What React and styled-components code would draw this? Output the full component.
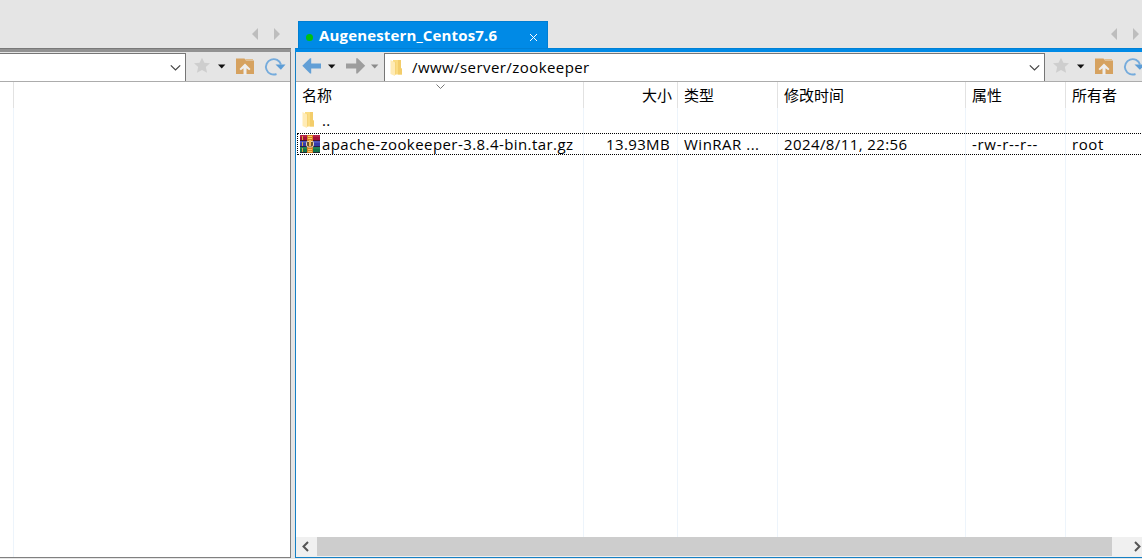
import React from "react";
import styled, { createGlobalStyle } from "styled-components";

const Global = createGlobalStyle`
  * { box-sizing: border-box; }
  html, body, #root { margin: 0; height: 100%; overflow: hidden; }
  body { background: #e5e5e5; color: #000; font: 15px/20px "Open Sans", "Noto Sans CJK SC", sans-serif; }
  svg { display: block; flex: none; }
`;

const Window = styled.div`
  display: flex;
  gap: 4px;
  width: 1142px;
  height: 559px;
  padding-bottom: 1px;
  overflow: hidden;
`;
const Pane = styled.section`
  display: flex;
  flex-direction: column;
  flex: none;
  width: ${(p) => p.$width}px;
`;
const TabStrip = styled.header`
  display: flex;
  align-items: flex-end;
  justify-content: flex-end;
  height: 48px;
  flex: none;
`;
const Tab = styled.div`
  display: flex;
  align-items: center;
  width: 250px;
  height: 27px;
  margin: 0 auto 0 3px;
  padding: 0 10px 0 7px;
  background: #008ae6;
  border: 1px solid #007ed2;
  border-bottom: 0;
  color: #fff;
  font-weight: 700;
`;
const Dot = styled.i`
  width: 7px;
  height: 7px;
  margin: 4px 6px 0 0;
  border-radius: 50%;
  background: #00c010;
`;
const Close = styled.svg`
  margin: 4px 0 0 auto;
`;
const Text = styled.span`
  white-space: pre;
  letter-spacing: ${(p) => p.$track ?? 0.43}px;
`;
const TabText = styled(Text)`
  margin-bottom: 1px;
`;
const TabArrows = styled.svg`
  margin: 0 ${(p) => p.$right}px 8px 0;
`;
const Body = styled.div`
  display: flex;
  flex-direction: column;
  flex: 1;
  min-height: 0;
  border: solid ${(p) => (p.$active ? "#1580c4" : "#808080")};
  border-width: ${(p) => (p.$active ? "0 0 1px 1px" : "0 1px 1px 0")};
`;
const Accent = styled.div`
  height: 4px;
  flex: none;
  background: ${(p) => (p.$active ? "#008ae6" : "#929292")};
  border-top: 1px solid ${(p) => (p.$active ? "#0080d5" : "#797979")};
`;
const Toolbar = styled.div`
  display: flex;
  align-items: center;
  height: 30px;
  flex: none;
  border-bottom: 1px solid #acacac;
`;
const Address = styled.div`
  display: flex;
  align-items: center;
  align-self: flex-end;
  width: ${(p) => p.$width}px;
  height: 28px;
  padding: 0 4px 0 5px;
  background: #fff;
  border: 1px solid #767676;
  border-bottom: 0;
  border-left-width: ${(p) => (p.$open ? 0 : 1)}px;
`;
const PathText = styled(Text)`
  margin: 0 0 2px 8px;
`;
const ParentText = styled(Text)`
  margin-left: 6px;
`;
const FileText = styled(Text)`
  margin-left: 2px;
`;
const Chevron = styled.svg`
  margin-left: auto;
`;
const Tools = styled.svg`
  margin-left: 8px;
`;
const List = styled.div`
  display: flex;
  position: relative;
  flex-direction: column;
  flex: 1;
  min-height: 0;
  background: #fff;
`;
const Row = styled.div`
  position: relative;
  display: grid;
  grid-template-columns: ${(p) => p.$columns};
  height: ${(p) => (p.$height ? p.$height + "px" : "auto")};
  flex: ${(p) => (p.$height ? "none" : 1)};
`;
const Cell = styled.div`
  display: flex;
  align-items: center;
  justify-content: ${(p) => (p.$right ? "flex-end" : "flex-start")};
  padding: 0 ${(p) => p.$padRight || 0}px 0 ${(p) => p.$pad ?? 6}px;
  border-right: 1px solid ${(p) => (p.$head ? "#e2e2e2" : "#edf4fb")};
  white-space: nowrap;
  &:last-child { border-right: 0; }
`;
const LastCell = styled(Cell)`
  border-right: 0;
`;
const Focus = styled.div`
  position: absolute;
  inset: 1px -4px 1px 1px;
  border: 1px dotted #000;
`;
const SortMark = styled.svg`
  position: absolute;
  left: 140px;
  top: 2px;
`;
const Scrollbar = styled.div`
  display: flex;
  align-items: center;
  height: 20px;
  flex: none;
  background: #f0f0f0;
`;
const ScrollButton = styled.svg`
  width: ${(p) => p.$width}px;
  height: 20px;
`;
const Thumb = styled.div`
  flex: none;
  width: 795px;
  height: 19px;
  align-self: flex-start;
  background: #cdcdcd;
`;

const columns = "288px 94px 100px 188px 100px 1fr";
const headings = ["名称", "大小", "类型", "修改时间", "属性", "所有者"];

const StripArrows = ({ right }) => (
  <TabArrows width="30" height="12" fill="#bdbdbd" $right={right}>
    <path d="M7 0v12L1 6zM23 0v12l6-6z" />
  </TabArrows>
);
const DropMark = () => (
  <Chevron width="11" height="8" fill="none" stroke="#444" strokeWidth="1.2">
    <path d="m.8 1.3 4.7 4.7 4.7-4.7" />
  </Chevron>
);
const FolderIcon = () => (
  <svg width="14" height="18" viewBox="0 0 14 18">
    <path d="M3 1h8v8l1 1v5.500H3z" fill="#fbdc82" />
    <path d="M8 1h3v8l1 1v5.500H8z" fill="#f3cd6b" />
    <path d="m.5 1 4.500 2.500V17l-4.500-2z" fill="#ffebb5" />
    <path d="M5.500 3v12.500" stroke="#f6d479" />
  </svg>
);
const ArchiveIcon = () => (
  <svg width="20" height="18" viewBox="0 0 20 18">
    <path d="M0 0h20v6H0z" fill="#a3133a" />
    <path d="M0 6h20v6H0z" fill="#353caa" />
    <path d="M0 12h20v6H0z" fill="#14744a" />
    <path d="M0 1h20" stroke="#c83a58" />
    <path d="M0 7h20" stroke="#6369cf" />
    <path d="M0 13h20" stroke="#319064" />
    <path d="M0 5.500h20M0 11.500h20M0 17.500h20" stroke="#251529" strokeOpacity=".75" />
    <path d="M2.500 1v4M2.500 7v4M2.500 13v4" stroke="#d9a83c" />
    <path d="M7 0h6v18H7z" fill="#d98025" />
    <path d="M8 1.500h4M8 3.500h4M8 14.500h4M8 16.500h4" stroke="#f5ca61" />
    <path d="M6.500 10V7.500q0-1 1-1h5q1 0 1 1V10q0 2-2 2h-3q-2 0-2-2z" fill="#70502b" stroke="#e5d7b8" />
    <path d="M10 5v6" stroke="#f3bd52" strokeWidth="2" />
  </svg>
);
const ToolIcons = () => (
  <Tools width="94" height="23" viewBox="0 0 94 23">
    <path d="m8 2.700 2.400 5 5.600.5-4.200 3.900 1.300 5.700L8 14.900l-5.100 2.900 1.300-5.700L0 8.200l5.600-.5z" fill="#cecece" />
    <path d="M24 9.500h7.400L27.700 13.500z" fill="#111" />
    <path d="M42 3.500h8.500l1.500 2h8V19H42z" fill="#d6a260" />
    <path d="M51 4h8v1.500h-7z" fill="#e2bd8b" />
    <path d="m51 8.500 5.500 5.500-1.300 1.200-2.700-2V20h-3v-6.800l-2.700 2-1.300-1.200z" fill="#eee" />
    <path d="M82.500 19A7.700 7.700 0 1 1 87 9.500" fill="none" stroke="#75abdc" strokeWidth="1.900" />
    <path d="M81.500 9.500h10l-4.600 5.300z" fill="#5d9dd6" />
  </Tools>
);
const NavIcons = () => (
  <svg width="88" height="23" viewBox="0 0 88 23">
    <path d="M6.300 10.800 14 3.200h1.200V8.500H25v5h-9.800v5H14z" fill="#629fd6" />
    <path d="M32 9.500h7.400L35.700 13.500z" fill="#111" />
    <path d="M69.200 10.800 61.500 3.200h-1.300V8.500H50v5h10.200v5h1.300z" fill="#9d9d9d" />
    <path d="M75 9.500h7.400L78.700 13.500z" fill="#8b8b8b" />
  </svg>
);

export default function App() {
  return (
    <>
      <Global />
      <Window>
        <Pane $width={291}>
          <TabStrip><StripArrows right={10} /></TabStrip>
          <Accent />
          <Body>
            <Toolbar>
              <Address $width={186} $open><DropMark /></Address>
              <ToolIcons />
            </Toolbar>
            <List>
              <Row $columns="14px 1fr" $height={26}><Cell $head /><Cell /></Row>
              <Row $columns="14px 1fr"><Cell /><Cell /></Row>
            </List>
          </Body>
        </Pane>
        <Pane $width={860}>
          <TabStrip>
            <Tab>
              <Dot />
              <TabText $track={0.16}>Augenestern_Centos7.6</TabText>
              <Close width="7" height="7" stroke="#fff" strokeWidth="1"><path d="m0 0 7 7M7 0 0 7" /></Close>
            </Tab>
            <StripArrows right={15} />
          </TabStrip>
          <Accent $active />
          <Body $active>
            <Toolbar>
              <NavIcons />
              <Address $width={661}>
                <FolderIcon />
                <PathText>/www/server/zookeeper</PathText>
                <DropMark />
              </Address>
              <ToolIcons />
            </Toolbar>
            <List>
              <SortMark width="10" height="6" fill="none" stroke="#777"><path d="m.5.5 4 4 4-4" /></SortMark>
              <Row $columns={columns} $height={26}>
                {headings.map((h, i) => (
                  <Cell key={h} $head $right={i === 1} $padRight={i === 1 ? 5 : 0}>{h}</Cell>
                ))}
              </Row>
              <Row $columns={columns} $height={24}>
                <Cell><FolderIcon /><ParentText>..</ParentText></Cell>
                <Cell /><Cell /><Cell /><Cell /><Cell />
              </Row>
              <Row $columns={columns} $height={24}>
                <Cell $pad={4}><ArchiveIcon /><FileText>apache-zookeeper-3.8.4-bin.tar.gz</FileText></Cell>
                <Cell $right $padRight={7}><Text $track={0.35}>13.93MB</Text></Cell>
                <Cell><Text $track={0.5}>WinRAR ...</Text></Cell>
                <Cell><Text $track={0.4}>2024/8/11, 22:56</Text></Cell>
                <Cell><Text $track={0.7}>-rw-r--r--</Text></Cell>
                <LastCell><Text $track={0.6}>root</Text></LastCell>
                <Focus />
              </Row>
              <Row $columns={columns}>{headings.map((h) => <Cell key={h} />)}</Row>
            </List>
            <Scrollbar>
              <ScrollButton $width={21} viewBox="0 0 21 20" fill="none" stroke="#555" strokeWidth="2"><path d="m12 5-4.500 4.500L12 14" /></ScrollButton>
              <Thumb />
              <ScrollButton $width={43} viewBox="0 0 43 20" fill="none" stroke="#555" strokeWidth="2"><path d="m23 5 4.500 4.500L23 14" /></ScrollButton>
            </Scrollbar>
          </Body>
        </Pane>
      </Window>
    </>
  );
}
